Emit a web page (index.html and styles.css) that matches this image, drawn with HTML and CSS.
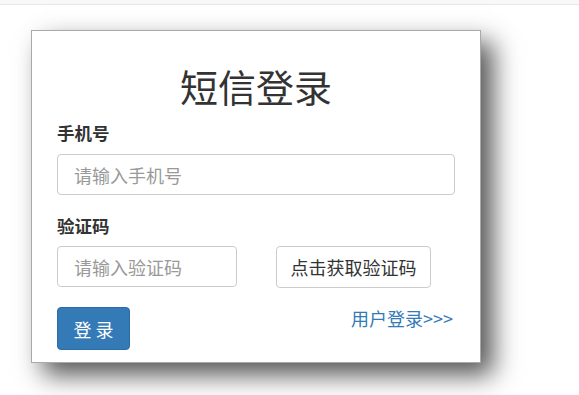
FILE: index.html
```html
<!DOCTYPE html>
<html lang="zh-CN">
<head>
<meta charset="utf-8">
<title>短信登录</title>
<link rel="stylesheet" href="styles.css">
</head>
<body>
<div class="topbar"></div>
<div class="card">
  <h1 class="title">短信登录</h1>
  <label class="label label-phone">手机号</label>
  <input class="input input-phone" type="text" placeholder="请输入手机号">
  <label class="label label-code">验证码</label>
  <div class="code-row">
    <input class="input input-code" type="text" placeholder="请输入验证码">
    <button class="btn btn-code" type="button">点击获取验证码</button>
  </div>
  <div class="action-row">
    <button class="btn btn-login" type="button">登 录</button>
    <a class="link" href="#">用户登录&gt;&gt;&gt;</a>
  </div>
</div>
</body>
</html>
```

FILE: styles.css
```css
* { box-sizing: border-box; }
html, body { margin: 0; padding: 0; background: #fff; }
body {
  font-family: "Noto Sans CJK SC", "Noto Sans", sans-serif;
  color: #333;
  width: 579px;
  height: 395px;
  overflow: hidden;
}
.topbar {
  height: 5px;
  background: #f8f8f8;
  border-bottom: 1px solid #e7e7e7;
}
.card {
  margin: 25px 0 0 31px;
  width: 450px;
  height: 333px;
  border: 1px solid #a9a9a9;
  background: #fff;
  padding: 0 25px;
  box-shadow: 12px 12px 24px #555;
  display: flex;
  flex-direction: column;
}
.title {
  margin: 35px 0 0;
  font-size: 38px;
  font-weight: 400;
  line-height: 40px;
  height: 40px;
  text-align: center;
  color: #333;
}
.label {
  display: block;
  font-size: 17.5px;
  font-weight: 700;
  line-height: 24px;
  height: 24px;
  color: #333;
}
.label-phone { margin-top: 15px; }
.label-code { margin-top: 19px; }
.input {
  height: 41px;
  border: 1px solid #ccc;
  border-radius: 4px;
  padding: 0 16px;
  font-family: inherit;
  font-size: 18px;
  color: #555;
  background: #fff;
  outline: none;
}
.input::placeholder { color: #999; }
.input-phone { margin-top: 9px; width: 398px; }
.code-row {
  margin-top: 8px;
  display: flex;
  gap: 39px;
}
.input-code { width: 180px; }
.btn {
  font-family: inherit;
  font-size: 18px;
  border-radius: 4px;
  cursor: pointer;
  padding: 0;
}
.btn-code {
  width: 155px;
  height: 42px;
  background: #fff;
  border: 1px solid #ccc;
  color: #333;
}
.action-row {
  margin-top: 19px;
  display: flex;
  justify-content: space-between;
  align-items: flex-start;
}
.btn-login {
  width: 73px;
  height: 43px;
  background: #337ab7;
  border: 1px solid #2e6da4;
  color: #fff;
}
.link {
  margin-right: 2px;
  margin-top: -1px;
  font-size: 18px;
  line-height: 24px;
  color: #337ab7;
  text-decoration: none;
}
```
